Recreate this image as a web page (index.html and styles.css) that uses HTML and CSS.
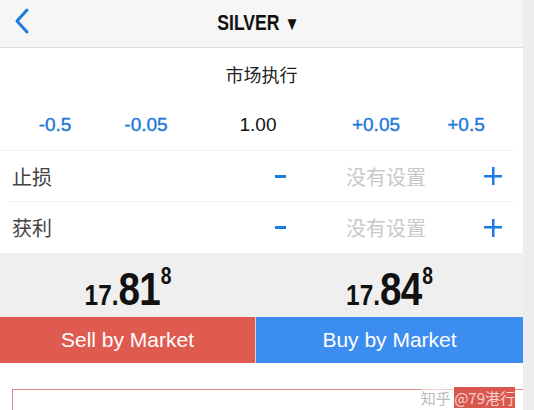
FILE: index.html
```html
<!DOCTYPE html>
<html>
<head>
<meta charset="utf-8">
<link rel="stylesheet" href="styles.css">
</head>
<body>
<div class="page">
  <div class="main">
    <header class="nav">
      <svg class="back" width="16" height="28" viewBox="0 0 16 28"><path d="M13 3 L3 14 L13 25" fill="none" stroke="#1a7be0" stroke-width="3" stroke-linecap="round" stroke-linejoin="round"/></svg>
      <div class="title">SILVER <span class="tri">▼</span></div>
    </header>
    <div class="mode">市场执行</div>
    <div class="volume">
      <span class="step">-0.5</span>
      <span class="step">-0.05</span>
      <span class="vol">1.00</span>
      <span class="step">+0.05</span>
      <span class="step">+0.5</span>
    </div>
    <div class="row">
      <span class="label">止损</span>
      <span class="minus"></span>
      <span class="unset">没有设置</span>
      <span class="plus"></span>
    </div>
    <div class="row last">
      <span class="label">获利</span>
      <span class="minus"></span>
      <span class="unset">没有设置</span>
      <span class="plus"></span>
    </div>
    <div class="prices">
      <div class="price"><span class="small">17.</span><span class="big">81</span><span class="pip">8</span></div>
      <div class="price"><span class="small">17.</span><span class="big">84</span><span class="pip">8</span></div>
    </div>
    <div class="buttons">
      <div class="btn sell">Sell by Market</div>
      <div class="btn buy">Buy by Market</div>
    </div>
    <div class="chart-area">
      <div class="chart"></div>
      <div class="wm">知乎 <span class="wm-red">@79港行</span></div>
    </div>
  </div>
  <div class="edge"></div>
</div>
</body>
</html>
```
FILE: styles.css
```css
html, body {
  margin: 0;
  padding: 0;
  background: #fff;
  font-family: "Liberation Sans", Arial, "Noto Sans CJK SC", sans-serif;
}
.page {
  display: flex;
  width: 534px;
  height: 410px;
  overflow: hidden;
}
.main {
  width: 523px;
  display: flex;
  flex-direction: column;
}
.main > * {
  flex-shrink: 0;
}
.edge {
  flex: 1;
  background: #ededed;
}
.nav {
  height: 47px;
  background: #f6f6f6;
  border-bottom: 1px solid #dcdcdc;
  display: flex;
  align-items: center;
  justify-content: center;
  position: relative;
}
.back {
  position: absolute;
  left: 14px;
  top: 7px;
}
.title {
  font-weight: bold;
  font-size: 22px;
  color: #111;
  transform: scaleX(0.8);
  margin-left: -6px;
  margin-top: -2px;
}
.tri {
  font-size: 19px;
}
.mode {
  height: 52px;
  display: flex;
  align-items: center;
  justify-content: center;
  font-family: "Noto Sans CJK SC", sans-serif;
  font-size: 18px;
  color: #222;
}
.volume {
  height: 50px;
  display: grid;
  grid-template-columns: 110px 72px 152px 84px 96px;
  align-items: center;
  justify-items: center;
  font-size: 19px;
  border-bottom: 1px solid #f0f0f0;
  margin: 0 10px 0 0;
}
.step {
  color: #1a78d8;
  -webkit-text-stroke: 0.35px #1a78d8;
}
.vol {
  color: #111;
}
.row {
  height: 50px;
  display: flex;
  align-items: center;
  margin: 0 10px;
  border-bottom: 1px solid #f0f0f0;
}
.row.last {
  border-bottom: none;
  height: 51px;
}
.label {
  font-family: "Noto Sans CJK SC", sans-serif;
  font-size: 20px;
  color: #444;
  width: 263px;
  margin-left: 2px;
}
.minus {
  width: 11px;
  height: 3px;
  background: #1a7be0;
  margin-right: 60px;
}
.unset {
  font-family: "Noto Sans CJK SC", sans-serif;
  font-size: 20px;
  color: #c9c9c9;
  width: 80px;
}
.plus {
  margin-left: 58px;
  width: 18px;
  height: 18px;
  background:
    linear-gradient(#1a7be0, #1a7be0) center / 18px 2.5px no-repeat,
    linear-gradient(#1a7be0, #1a7be0) center / 2.5px 18px no-repeat;
}
.prices {
  height: 64px;
  background: #efefef;
  display: grid;
  grid-template-columns: 256px 267px;
  align-items: center;
}
.price {
  display: flex;
  align-items: baseline;
  justify-content: center;
  font-weight: bold;
  color: #111;
  padding-top: 8px;
  transform: scaleX(0.84);
}
.small {
  font-size: 29px;
}
.big {
  font-size: 46px;
  letter-spacing: -1px;
}
.pip {
  font-size: 23px;
  align-self: flex-start;
  margin-left: 1px;
  margin-top: 1px;
}
.buttons {
  height: 46px;
  display: grid;
  grid-template-columns: 255px 1px 267px;
}
.btn {
  display: flex;
  align-items: center;
  justify-content: center;
  color: #fff;
  font-size: 21px;
}
.sell {
  background: #e05b4f;
  grid-column: 1;
  grid-row: 1;
}
.buy {
  background: #3c8df0;
  grid-column: 3;
  grid-row: 1;
}
.buttons::before {
  content: "";
  grid-column: 2;
  grid-row: 1;
  background: #e8c8c8;
}
.chart-area {
  flex: 1;
  position: relative;
}
.chart {
  margin: 26px 0 0 12px;
  height: 40px;
  border-top: 1px solid #e08a84;
  border-left: 1px solid #e08a84;
}
.wm {
  position: absolute;
  right: 8px;
  top: 24px;
  font-family: "Noto Sans CJK SC", sans-serif;
  font-size: 15px;
  color: #bbb;
  background: rgba(255,255,255,0.6);
}
.wm-red {
  color: #f3d3d0;
  background: #d9574c;
}
```
